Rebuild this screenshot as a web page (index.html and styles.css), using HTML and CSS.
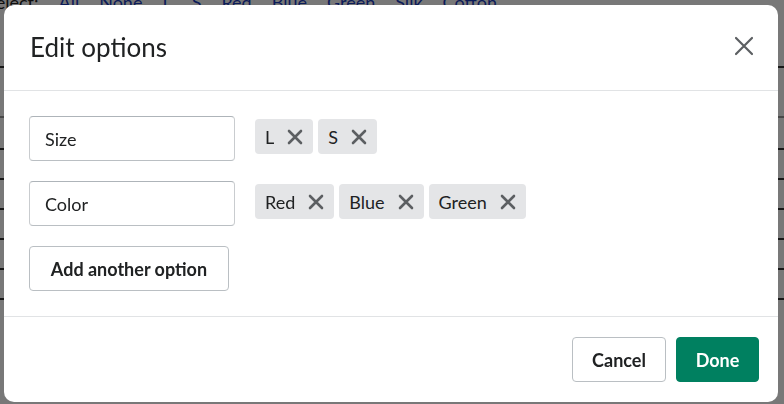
FILE: index.html
```html
<!DOCTYPE html>
<html lang="en">
<head>
<meta charset="utf-8">
<title>Edit options</title>
<link rel="stylesheet" href="styles.css">
</head>
<body>
<div class="page">
  <div class="select-row">
    <span class="lbl">Select:</span>
    <a>All</a><a>None</a><a>L</a><a>S</a><a>Red</a><a>Blue</a><a>Green</a><a>Silk</a><a>Cotton</a>
  </div>
  <div class="rows">
    <div class="row r1"></div>
    <div class="row r2"></div>
    <div class="row r3"></div>
    <div class="row r4"></div>
    <div class="row r5"></div>
    <div class="row r6"></div>
    <div class="row r7"></div>
    <div class="row r8"></div>
  </div>
</div>
<div class="backdrop">
  <div class="modal">
    <div class="modal-header">
      <h2 class="title">Edit options</h2>
      <button class="close" aria-label="Close">
        <svg width="20" height="20" viewBox="0 0 20 20"><path d="M2 2 L18 18 M18 2 L2 18" stroke="#5c5f62" stroke-width="2.2" stroke-linecap="round" fill="none"/></svg>
      </button>
    </div>
    <div class="modal-body">
      <div class="option-row">
        <div class="field">Size</div>
        <div class="chips">
          <span class="chip">L<svg class="x" viewBox="0 0 16 16"><path d="M2 2 L14 14 M14 2 L2 14" stroke="#5c5f62" stroke-width="2.6" stroke-linecap="round" fill="none"/></svg></span>
          <span class="chip">S<svg class="x" viewBox="0 0 16 16"><path d="M2 2 L14 14 M14 2 L2 14" stroke="#5c5f62" stroke-width="2.6" stroke-linecap="round" fill="none"/></svg></span>
        </div>
      </div>
      <div class="option-row">
        <div class="field">Color</div>
        <div class="chips">
          <span class="chip">Red<svg class="x" viewBox="0 0 16 16"><path d="M2 2 L14 14 M14 2 L2 14" stroke="#5c5f62" stroke-width="2.6" stroke-linecap="round" fill="none"/></svg></span>
          <span class="chip">Blue<svg class="x" viewBox="0 0 16 16"><path d="M2 2 L14 14 M14 2 L2 14" stroke="#5c5f62" stroke-width="2.6" stroke-linecap="round" fill="none"/></svg></span>
          <span class="chip">Green<svg class="x" viewBox="0 0 16 16"><path d="M2 2 L14 14 M14 2 L2 14" stroke="#5c5f62" stroke-width="2.6" stroke-linecap="round" fill="none"/></svg></span>
        </div>
      </div>
      <div class="option-row">
        <button class="btn add">Add another option</button>
      </div>
    </div>
    <div class="modal-footer">
      <button class="btn cancel">Cancel</button>
      <button class="btn done">Done</button>
    </div>
  </div>
</div>
</body>
</html>
```
FILE: styles.css
```css
* { box-sizing: border-box; }
html, body { margin: 0; padding: 0; }
body {
  width: 784px;
  height: 404px;
  overflow: hidden;
  font-family: Lato, "Open Sans", sans-serif;
  color: #202223;
  background: #ffffff;
}
.page {
  width: 784px;
  height: 404px;
  overflow: hidden;
  background: #fff;
}
.select-row {
  display: flex;
  gap: 20px;
  margin-top: -8px;
  margin-left: -14px;
  font-size: 18px;
  line-height: 20px;
  color: #222;
  white-space: nowrap;
}
.select-row a { color: #1a3dbd; }
.rows { display: flex; flex-direction: column; }
.row { border-bottom: 2px solid #333; height: 30px; }
.r1 { height: 56px; }
.r2 { height: 50px; border-color: #999; }
.r3 { height: 32px; }
.backdrop {
  position: fixed;
  inset: 0;
  background: rgba(0, 0, 0, 0.53);
  padding: 5px 6px 2px 4px;
}
.modal {
  width: 774px;
  height: 397px;
  background: #fff;
  border-radius: 10px;
  display: flex;
  flex-direction: column;
  overflow: hidden;
}
.modal-header {
  height: 86px;
  display: flex;
  align-items: center;
  justify-content: space-between;
  padding: 0 26px 0 26px;
  border-bottom: 1px solid #e1e3e5;
}
.title {
  margin: 0;
  font-size: 26px;
  font-weight: 400;
  color: #202223;
  margin-top: -2px;
}
.close {
  border: 0;
  background: none;
  padding: 0;
  width: 20px;
  height: 20px;
  margin-right: -2px;
  margin-top: -4px;
  display: flex;
}
.modal-body {
  padding: 25px;
  display: flex;
  flex-direction: column;
  gap: 20px;
  border-bottom: 1px solid #e1e3e5;
}
.option-row {
  display: flex;
  align-items: flex-start;
  gap: 20px;
}
.field {
  width: 206px;
  height: 45px;
  border: 1px solid #c9cccf;
  border-top-color: #aeb4b9;
  border-bottom-color: #babfc3;
  border-radius: 4px;
  padding: 0 15px;
  display: flex;
  align-items: center;
  font-size: 18px;
  color: #202223;
}
.chips {
  display: flex;
  gap: 5px;
  margin-top: 3px;
}
.chip {
  height: 35px;
  display: inline-flex;
  align-items: center;
  gap: 13px;
  padding: 0 10px;
  background: #e4e5e7;
  border-radius: 4px;
  font-size: 18px;
  color: #202223;
}
.x { width: 16px; height: 16px; }
.btn {
  font-family: Lato, "Open Sans", sans-serif;
  height: 45px;
  border-radius: 4px;
  font-size: 18px;
  font-weight: 700;
  padding: 0 10px;
  white-space: nowrap;
  cursor: pointer;
}
.add {
  width: 200px;
  background: #fff;
  border: 1px solid #babfc3;
  color: #202223;
}
.modal-footer {
  flex: 1;
  display: flex;
  justify-content: flex-end;
  align-items: flex-start;
  gap: 10px;
  padding: 20px 19px;
}
.cancel {
  width: 94px;
  background: #fff;
  border: 1px solid #babfc3;
  color: #202223;
}
.done {
  width: 83px;
  background: #008060;
  border: 1px solid #008060;
  color: #fff;
}
```
